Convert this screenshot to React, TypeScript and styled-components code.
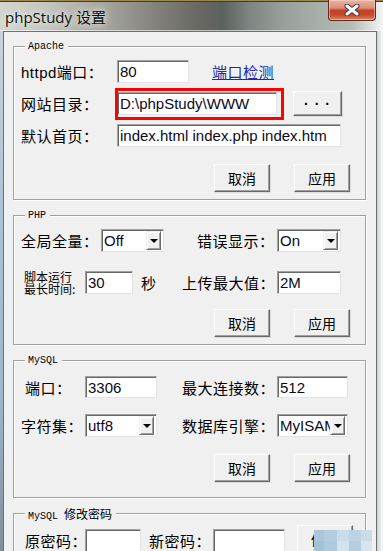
import React from "react";
import styled, { createGlobalStyle } from "styled-components";

const GlobalStyle = createGlobalStyle`
  html, body {
    margin: 0;
    padding: 0;
    background: #ffffff;
    overflow: hidden;
  }
  * {
    box-sizing: border-box;
  }
`;

const cjk = `"Liberation Sans", "Noto Sans CJK SC", sans-serif`;
const mono = `"Liberation Mono", "Noto Sans CJK SC", monospace`;

export default function App() {
  return (
    <>
      <GlobalStyle />
      <Window>
        <TitleBar>
          <TitleText>phpStudy 设置</TitleText>
          <CloseButton>
            <svg width="16" height="12" viewBox="0 0 16 12">
              <path d="M3 2 L13 10 M13 2 L3 10" stroke="#3a3a3a" strokeWidth="5" strokeLinecap="round" />
              <path d="M3 2 L13 10 M13 2 L3 10" stroke="#ffffff" strokeWidth="3" strokeLinecap="round" />
            </svg>
          </CloseButton>
        </TitleBar>

        <Frame>
          <LeftEdge />
          <Client>
            {/* Apache */}
            <Group $top={14} $height={154} $padTop={13}>
              <Legend>Apache</Legend>
              <Row $height={23}>
                <Label $width={96}>httpd端口：</Label>
                <TextBox $width={72} value="80" readOnly />
                <PortLink href="#">端口检测</PortLink>
              </Row>
              <Row $height={23} $gap={9}>
                <Label $width={96}>网站目录：</Label>
                <Marked>
                  <TextBox $width={160} value="D:\phpStudy\WWW" readOnly />
                  <RedMark />
                </Marked>
                <BrowseButton>· · ·</BrowseButton>
              </Row>
              <Row $height={23} $gap={9}>
                <Label $width={96}>默认首页：</Label>
                <TextBox $width={224} value="index.html index.php index.htm" readOnly />
              </Row>
              <ButtonRow $gap={17}>
                <PushButton>取消</PushButton>
                <PushButton>应用</PushButton>
              </ButtonRow>
            </Group>

            {/* PHP */}
            <Group $top={15} $height={130} $padTop={13}>
              <Legend>PHP</Legend>
              <Row $height={23}>
                <Label $width={80}>全局全量：</Label>
                <Select $width={63}>
                  <span>Off</span>
                  <DropArrow />
                </Select>
                <Label $width={113} $pad={33}>错误显示：</Label>
                <Select $width={64}>
                  <span>On</span>
                  <DropArrow />
                </Select>
              </Row>
              <Row $height={23} $gap={19}>
                <SmallLabel>
                  <div>脚本运行</div>
                  <div>最长时间:</div>
                </SmallLabel>
                <TextBox $width={48} value="30" readOnly />
                <Label $width={49} $pad={8}>秒</Label>
                <Label $width={95}>上传最大值：</Label>
                <TextBox $width={64} value="2M" readOnly />
              </Row>
              <ButtonRow $gap={15}>
                <PushButton>取消</PushButton>
                <PushButton>应用</PushButton>
              </ButtonRow>
            </Group>

            {/* MySQL */}
            <Group $top={15} $height={138} $padTop={15}>
              <Legend>MySQL</Legend>
              <Row $height={22}>
                <Label $width={64} $pad={4}>端口：</Label>
                <TextBox $width={72} value="3306" readOnly />
                <Label $width={120} $pad={25}>最大连接数：</Label>
                <TextBox $width={71} value="512" readOnly />
              </Row>
              <Row $height={23} $gap={16}>
                <Label $width={64}>字符集：</Label>
                <Select $width={72}>
                  <span>utf8</span>
                  <DropArrow />
                </Select>
                <Label $width={120} $pad={25}>数据库引擎：</Label>
                <Select $width={71}>
                  <span>MyISAM</span>
                  <DropArrow />
                </Select>
              </Row>
              <ButtonRow $gap={17}>
                <PushButton>取消</PushButton>
                <PushButton>应用</PushButton>
              </ButtonRow>
            </Group>

            {/* MySQL 修改密码 */}
            <Group $top={15} $height={80} $padTop={15}>
              <Legend>
                MySQL <LegendCjk>修改密码</LegendCjk>
              </Legend>
              <Row $height={23} $align="flex-start">
                <Label $width={64} $pad={4}>原密码：</Label>
                <TextBox $width={56} value="" readOnly />
                <Label $width={72} $pad={8}>新密码：</Label>
                <TextBox $width={72} value="" readOnly />
                <ChangeButton>修改</ChangeButton>
              </Row>
            </Group>
          </Client>
          <RightEdge />
        </Frame>

        <Mosaic>
          {mosaicCells.map((c, i) => (
            <MosaicCell key={i} $color={c} />
          ))}
        </Mosaic>
      </Window>
    </>
  );
}

const mosaicCells = [
  "#a9c6da", "#b3cde0", "#cadcea", "#bcd3e3", "#c9dcea",
  "#a2c2d8", "#aecadf", "#d3e3ee", "#b4cee0", "#d6e5ef",
];

const Window = styled.div`
  position: relative;
  width: 383px;
  height: 551px;
  overflow: hidden;
  display: flex;
  flex-direction: column;
  font-family: ${cjk};
`;

const TitleBar = styled.header`
  height: 31px;
  flex: none;
  display: flex;
  align-items: flex-start;
  justify-content: space-between;
  padding-right: 7px;
  border-top: 1px solid #9c8650;
  box-shadow: inset 0 1px 0 #3e3e38, inset 0 -1px 0 rgba(255, 255, 255, 0.6);
  background: linear-gradient(
    90deg,
    #d3d6cf 0%,
    #c4c6bf 12%,
    #a3a49b 28%,
    #7f7f77 42%,
    #676862 52%,
    #5b625e 58%,
    #7c8581 65%,
    #97a09a 74%,
    #a8b0aa 84%,
    #b6bdb8 92%,
    #e4e7e6 98%,
    #f4f5f5 100%
  );
`;

const TitleText = styled.div`
  height: 30px;
  padding-left: 5px;
  display: flex;
  align-items: center;
  font-family: "Open Sans", "Noto Sans CJK SC", sans-serif;
  font-size: 15px;
  color: #111111;
  text-shadow: 0 0 6px rgba(255, 255, 255, 0.8), 0 0 10px rgba(255, 255, 255, 0.6);
`;

const CloseButton = styled.div`
  width: 48px;
  height: 21px;
  margin-top: -1px;
  display: flex;
  align-items: center;
  justify-content: center;
  border: 1px solid #5e2c22;
  border-top: none;
  border-radius: 0 0 4px 4px;
  background: linear-gradient(
    180deg,
    #e9b4a4 0%,
    #dc8e78 40%,
    #c2412a 52%,
    #c34a2f 75%,
    #de8560 100%
  );
  box-shadow: inset 0 0 0 1px rgba(255, 220, 210, 0.5);
`;

const Frame = styled.div`
  flex: 1;
  display: flex;
  min-height: 0;
`;

const LeftEdge = styled.div`
  width: 3px;
  flex: none;
  background: linear-gradient(180deg, #c6d2dc 0%, #a9c0d4 40%, #9fb7cc 70%, #7f8e9c 100%);
`;

const RightEdge = styled.div`
  width: 6px;
  flex: none;
  background: linear-gradient(90deg, #c9cfcf 0%, #e7eaea 50%, #f7f8f8 100%);
`;

const Client = styled.main`
  width: 374px;
  flex: none;
  background: #f0f0f0;
  border: 1px solid #6f7070;
  border-bottom: none;
  padding-left: 9px;
  overflow: hidden;
`;

const Group = styled.section<{ $top: number; $height: number; $padTop: number }>`
  position: relative;
  width: 353px;
  height: ${(p) => p.$height}px;
  flex: none;
  margin-top: ${(p) => p.$top}px;
  padding: ${(p) => p.$padTop}px 15px 0 7px;
  border: 1px solid #a0a0a0;
  box-shadow: 1px 1px 0 #ffffff, inset 1px 1px 0 #ffffff;
  display: flex;
  flex-direction: column;
`;

const Legend = styled.span`
  position: absolute;
  top: -8px;
  left: 11px;
  padding: 0 4px 0 3px;
  height: 15px;
  line-height: 15px;
  background: #f0f0f0;
  font-family: ${mono};
  font-size: 10px;
  color: #000000;
`;

const LegendCjk = styled.span`
  font-family: "Noto Sans CJK SC", sans-serif;
  font-size: 12px;
`;

const Row = styled.div<{ $height: number; $gap?: number; $align?: string }>`
  height: ${(p) => p.$height}px;
  margin-top: ${(p) => p.$gap ?? 0}px;
  display: flex;
  align-items: ${(p) => p.$align ?? "center"};
  flex: none;
`;

const Label = styled.div<{ $width: number; $pad?: number }>`
  width: ${(p) => p.$width}px;
  padding-left: ${(p) => p.$pad ?? 0}px;
  flex: none;
  align-self: center;
  font-family: ${cjk};
  font-size: 15px;
  letter-spacing: 0.5px;
  color: #000000;
  white-space: nowrap;
`;

const SmallLabel = styled.div`
  width: 64px;
  flex: none;
  padding-left: 3px;
  display: flex;
  flex-direction: column;
  font-family: "Noto Sans CJK SC", sans-serif;
  font-size: 12px;
  line-height: 12px;
  color: #000000;
  white-space: nowrap;

  div {
    height: 12px;
  }
`;

const TextBox = styled.input<{ $width: number }>`
  width: ${(p) => p.$width}px;
  height: 100%;
  flex: none;
  margin: 0;
  padding: 0 0 0 2px;
  border: 1px solid;
  border-color: #a0a0a0 #e3e3e3 #e3e3e3 #a0a0a0;
  box-shadow: inset 1px 1px 0 #696969;
  background: #ffffff;
  font-family: "Liberation Sans", sans-serif;
  font-size: 15px;
  color: #0a0a20;
  outline: none;
`;

const Marked = styled.div`
  position: relative;
  height: 100%;
  display: flex;
`;

const RedMark = styled.div`
  position: absolute;
  left: -2px;
  top: -4px;
  width: 169px;
  height: 32px;
  border: 3px solid #ff0000;
  pointer-events: none;
`;

const PortLink = styled.a`
  margin-left: 23px;
  font-family: ${cjk};
  font-size: 15px;
  letter-spacing: 0.5px;
  color: #1a2bb0;
  text-decoration: underline;
`;

const RaisedButton = styled.button`
  margin: 0;
  padding: 0;
  flex: none;
  border: 1px solid;
  border-color: #ffffff #696969 #696969 #ffffff;
  box-shadow: inset -1px -1px 0 #a0a0a0, 1px 1px 0 #dcdcdc;
  background: #f0f0f0;
  color: #000000;
  font-family: "Noto Sans CJK SC", sans-serif;
  font-size: 14px;
  cursor: pointer;
`;

const BrowseButton = styled(RaisedButton)`
  width: 49px;
  height: 25px;
  margin-left: 16px;
  font-family: "Liberation Sans", sans-serif;
  font-size: 14px;
  font-weight: bold;
  letter-spacing: 1px;
`;

const ButtonRow = styled.div<{ $gap: number }>`
  margin-top: ${(p) => p.$gap}px;
  display: flex;
  justify-content: flex-end;
  gap: 24px;
  flex: none;
`;

const PushButton = styled(RaisedButton)`
  width: 56px;
  height: 28px;
`;

const ChangeButton = styled(RaisedButton)`
  width: 56px;
  height: 28px;
  margin-top: -4px;
  margin-left: 12px;
`;

const Select = styled.div<{ $width: number }>`
  width: ${(p) => p.$width}px;
  height: 100%;
  flex: none;
  display: flex;
  align-items: center;
  justify-content: space-between;
  padding: 2px;
  border: 1px solid;
  border-color: #a0a0a0 #e3e3e3 #e3e3e3 #a0a0a0;
  box-shadow: inset 1px 1px 0 #696969;
  background: #ffffff;
  overflow: hidden;
  font-family: "Liberation Sans", sans-serif;
  font-size: 15px;
  color: #0a0a20;

  span {
    flex: 1;
    min-width: 0;
    overflow: hidden;
    white-space: nowrap;
  }
`;

const DropArrow = styled.div`
  width: 15px;
  height: 19px;
  flex: none;
  border: 1px solid;
  border-color: #f0f0f0 #696969 #696969 #f0f0f0;
  box-shadow: inset 1px 1px 0 #ffffff, inset -1px -1px 0 #a0a0a0;
  background: #f0f0f0;
  display: flex;
  align-items: center;
  justify-content: center;

  &::after {
    content: "";
    width: 0;
    height: 0;
    border-left: 4px solid transparent;
    border-right: 4px solid transparent;
    border-top: 4px solid #000000;
  }
`;

const Mosaic = styled.div`
  position: absolute;
  left: 314px;
  top: 530px;
  width: 58px;
  height: 21px;
  display: grid;
  grid-template-columns: 10px 13px 12px 12px 11px;
  grid-template-rows: 11px 10px;
`;

const MosaicCell = styled.div<{ $color: string }>`
  background: ${(p) => p.$color};
`;
